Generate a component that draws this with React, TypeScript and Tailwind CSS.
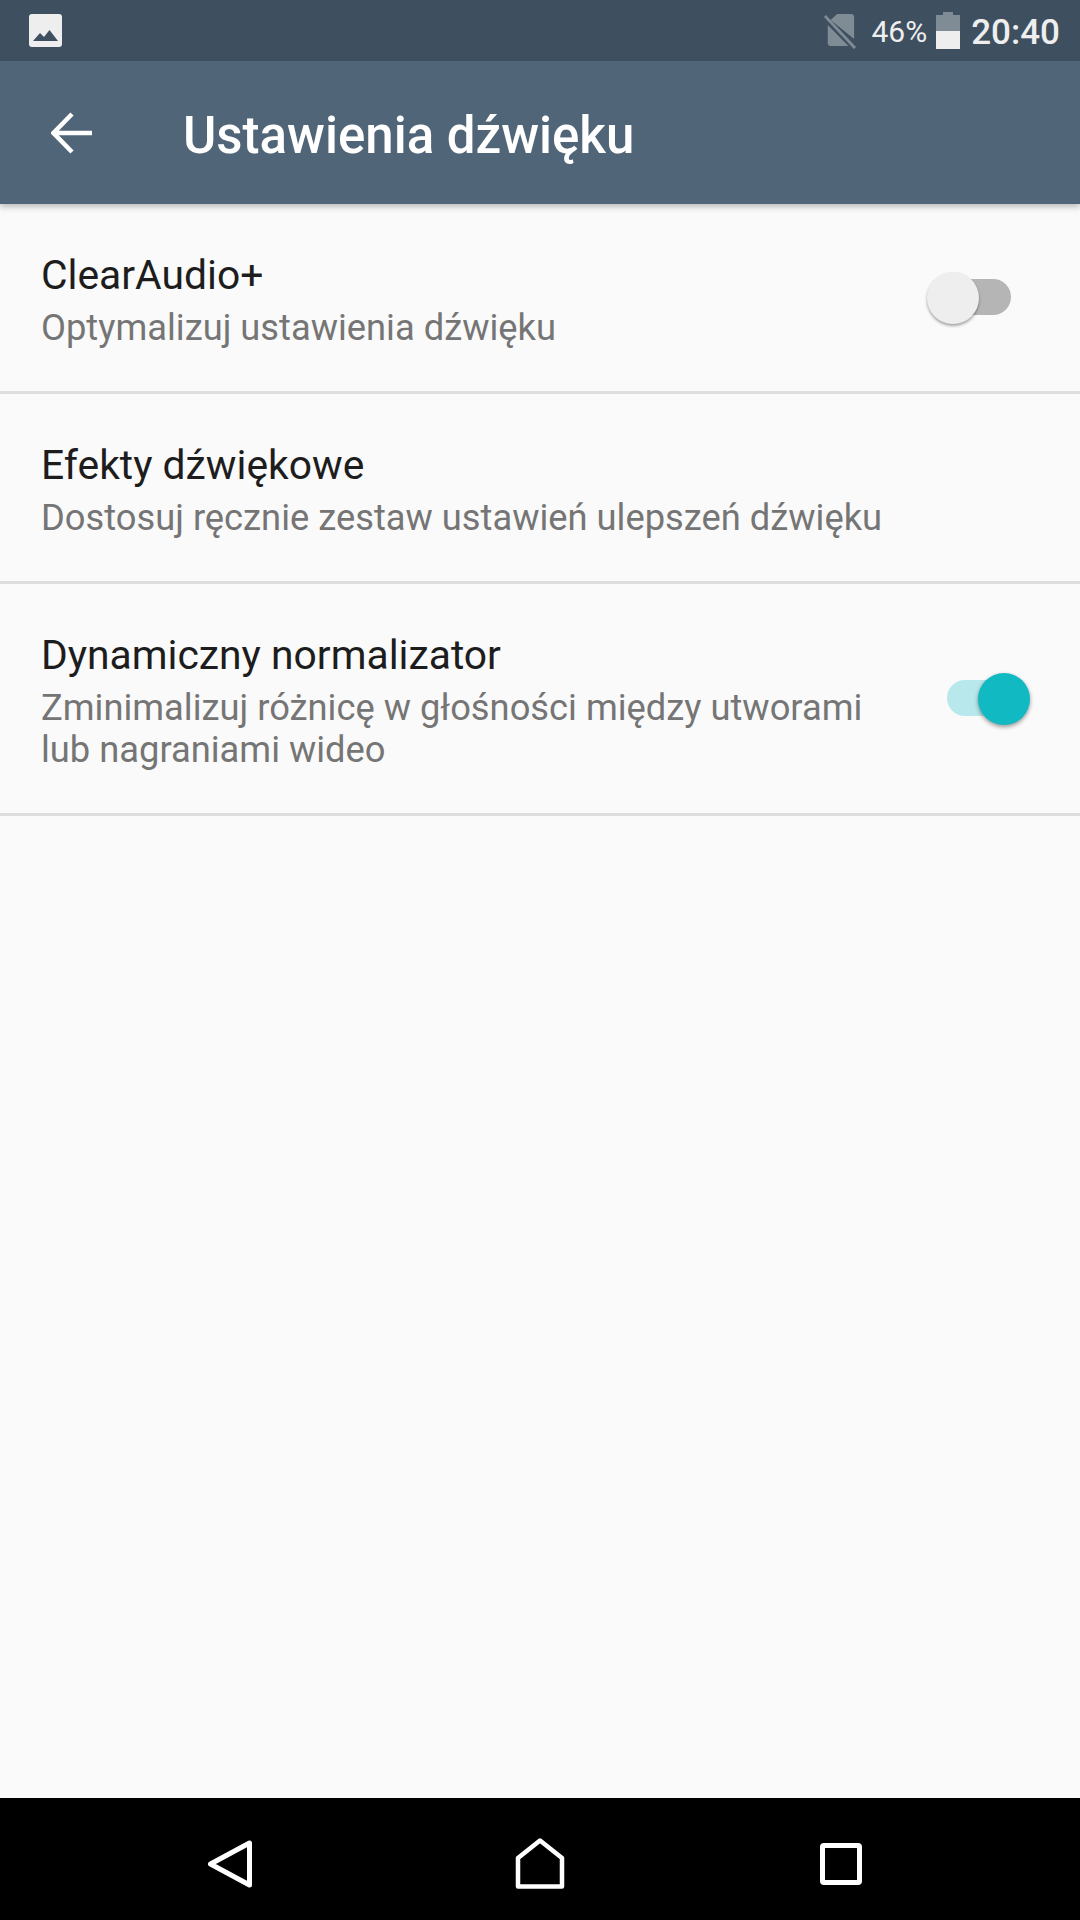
export default function App() {
  const rows = [
    { t: "ClearAudio+", s: ["Optymalizuj ustawienia dźwięku"], sw: "off", h: "h-[190px]" },
    { t: "Efekty dźwiękowe", s: ["Dostosuj ręcznie zestaw ustawień ulepszeń dźwięku"], sw: "", h: "h-[190px]" },
    { t: "Dynamiczny normalizator", s: ["Zminimalizuj różnicę w głośności między utworami", "lub nagraniami wideo"], sw: "on", h: "h-[232px]" },
  ];
  return (
    <div className="w-[1080px] h-[1920px] flex flex-col bg-[#fafafa] overflow-hidden font-['Roboto',sans-serif]">
      <div className="h-[61px] shrink-0 bg-[#3e5060] flex items-center pl-[29px] pr-[20px]">
        <svg width="33" height="33" viewBox="0 0 33 33">
          <rect width="33" height="33" rx="3" fill="#eeeeee" />
          <path d="M4 27 L11 19 L15 23 L20.5 16 L29 27 Z" fill="#3e5060" />
        </svg>
        <div className="ml-auto flex items-center">
          <svg width="32" height="36" viewBox="0 0 34 36" preserveAspectRatio="none" className="mr-[15px]">
            <path d="M14 1 H29 a3 3 0 0 1 3 3 V26 L7 7 Z M4 12 L26 33 H7 a3 3 0 0 1 -3 -3 Z" fill="#7f8b95" />
            <path d="M1 3 L33 35" stroke="#7f8b95" strokeWidth="3" />
          </svg>
          <span className="text-[30px] leading-none text-[#eeeeee] mr-[9px] pt-[2px]">46%</span>
          <svg width="24" height="37" viewBox="0 0 24 37" className="mr-[11px]">
            <path d="M7 0 H17 V3 H24 V19 H0 V3 H7 Z" fill="#7f8b95" />
            <rect y="19" width="24" height="18" fill="#eeeeee" />
          </svg>
          <span className="text-[35px] leading-none font-medium text-[#eeeeee] pt-[4px]">20:40</span>
        </div>
      </div>
      <div className="relative h-[143px] shrink-0 bg-[#506577] flex items-center pl-[51px] shadow-[0_3px_6px_rgba(0,0,0,0.25)]">
        <svg width="42" height="42" viewBox="0 0 42 42" className="shrink-0">
          <path d="M41 21 H3 M21 2 L2.5 21 L21 40" fill="none" stroke="#ffffff" strokeWidth="4.5" />
        </svg>
        <span className="ml-[90px] pt-[5px] text-[51px] leading-none font-medium text-white">Ustawienia dźwięku</span>
      </div>
      <div className="flex-1 flex flex-col">
        {rows.map((r) => (
          <div key={r.t} className={`${r.h} shrink-0 flex items-center pl-[41px] border-b-[3px] border-[#dedede]`}>
            <div className="flex-1 pt-[5px]">
              <div className="text-[40.8px] leading-[48px] text-[#1d1d1d]">{r.t}</div>
              {r.s.map((l, i) => (
                <div key={l} className={`text-[36.3px] leading-[42px] text-[#757575] ${i === 0 ? "mt-[8px]" : ""}`}>{l}</div>
              ))}
            </div>
            {r.sw === "off" && (
              <div className="relative w-[64px] h-[36px] mr-[69px] mb-[2px] rounded-full bg-[#b5b5b5]">
                <div className="absolute left-[-20px] top-[-7px] w-[52px] h-[52px] rounded-full bg-[#eeeeee] shadow-[0_2px_3px_rgba(0,0,0,0.35)]" />
              </div>
            )}
            {r.sw === "on" && (
              <div className="relative w-[64px] h-[36px] mr-[69px] mb-[2px] rounded-full bg-[#b9e8ec]">
                <div className="absolute right-[-19px] top-[-7px] w-[52px] h-[52px] rounded-full bg-[#11b9c2] shadow-[0_2px_4px_rgba(0,0,0,0.4)]" />
              </div>
            )}
          </div>
        ))}
      </div>
      <div className="h-[122px] shrink-0 bg-black flex items-center pl-[200px] pt-[9px]">
        <svg width="60" height="60" viewBox="0 0 60 60" className="shrink-0">
          <path d="M49.5 9 V51 L10.5 30 Z" fill="none" stroke="#fff" strokeWidth="5" strokeLinejoin="round" />
        </svg>
        <svg width="60" height="60" viewBox="0 0 60 60" className="shrink-0 ml-[250px]">
          <path d="M8 52.5 V24 L30 6.5 L52 24 V52.5 Z" fill="none" stroke="#fff" strokeWidth="4.5" strokeLinejoin="round" />
        </svg>
        <svg width="60" height="60" viewBox="0 0 60 60" className="shrink-0 ml-[241px]">
          <rect x="11.5" y="11.5" width="37" height="37" rx="1.5" fill="none" stroke="#fff" strokeWidth="5" />
        </svg>
      </div>
    </div>
  );
}
